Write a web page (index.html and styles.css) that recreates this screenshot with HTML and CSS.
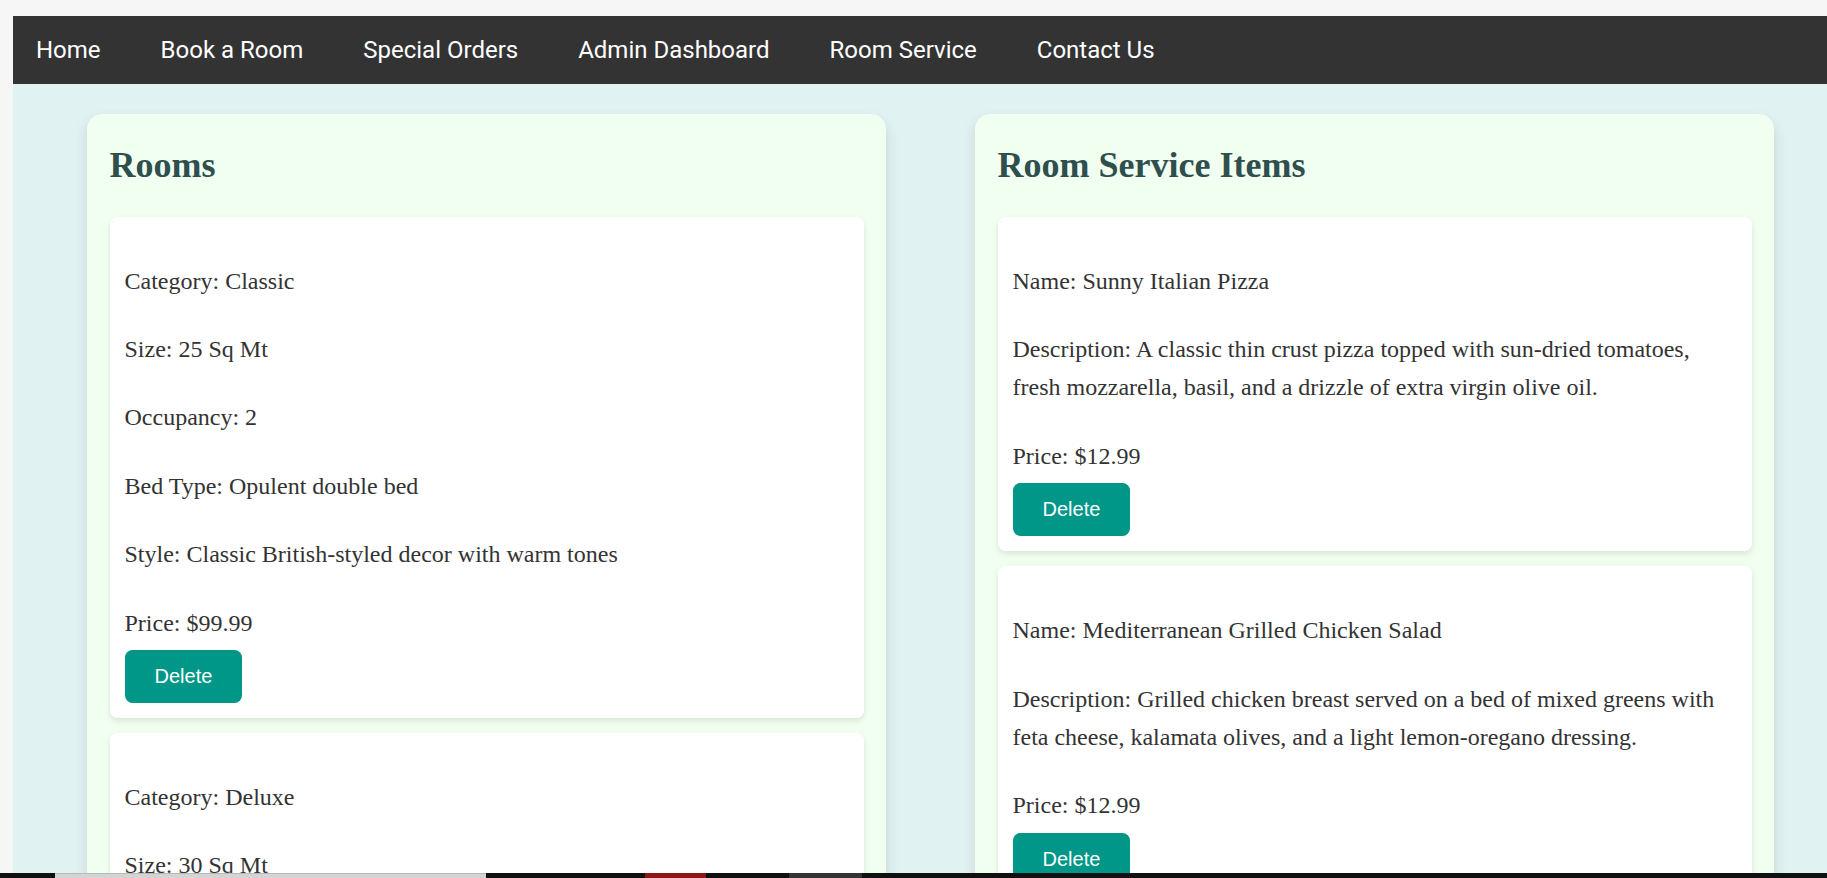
FILE: index.html
```html
<!DOCTYPE html>
<html lang="en">
<head>
<meta charset="utf-8">
<title>Admin Dashboard</title>
<link rel="stylesheet" href="styles.css">
</head>
<body>
<div class="page">
  <nav class="topnav">
    <a href="#">Home</a>
    <a href="#">Book a Room</a>
    <a href="#">Special Orders</a>
    <a href="#">Admin Dashboard</a>
    <a href="#">Room Service</a>
    <a href="#">Contact Us</a>
  </nav>
  <main class="content">
    <section class="panel">
      <h2 class="panel-title">Rooms</h2>
      <div class="card">
        <p>Category: Classic</p>
        <p>Size: 25 Sq Mt</p>
        <p>Occupancy: 2</p>
        <p>Bed Type: Opulent double bed</p>
        <p>Style: Classic British-styled decor with warm tones</p>
        <p class="price">Price: $99.99</p>
        <button class="btn-delete">Delete</button>
      </div>
      <div class="card">
        <p>Category: Deluxe</p>
        <p>Size: 30 Sq Mt</p>
        <p>Occupancy: 2</p>
        <p>Bed Type: King size bed</p>
        <p>Style: Modern decor with elegant finishes</p>
        <p class="price">Price: $149.99</p>
        <button class="btn-delete">Delete</button>
      </div>
    </section>
    <section class="panel">
      <h2 class="panel-title">Room Service Items</h2>
      <div class="card">
        <p>Name: Sunny Italian Pizza</p>
        <p>Description: A classic thin crust pizza topped with sun-dried tomatoes, fresh mozzarella, basil, and a drizzle of extra virgin olive oil.</p>
        <p class="price">Price: $12.99</p>
        <button class="btn-delete">Delete</button>
      </div>
      <div class="card">
        <p>Name: Mediterranean Grilled Chicken Salad</p>
        <p>Description: Grilled chicken breast served on a bed of mixed greens with feta cheese, kalamata olives, and a light lemon-oregano dressing.</p>
        <p class="price">Price: $12.99</p>
        <button class="btn-delete">Delete</button>
      </div>
    </section>
  </main>
</div>
<div class="taskbar">
  <span class="tb-seg tb-dark tb-w55"></span>
  <span class="tb-seg tb-light tb-w431"></span>
  <span class="tb-seg tb-dark tb-w159"></span>
  <span class="tb-seg tb-red tb-w61"></span>
  <span class="tb-seg tb-dark tb-w83"></span>
  <span class="tb-seg tb-grey tb-w73"></span>
  <span class="tb-seg tb-dark tb-fill"></span>
</div>
</body>
</html>
```

FILE: styles.css
```css
html {
  scrollbar-width: none;
}
html::-webkit-scrollbar {
  display: none;
}

body {
  margin: 0;
  padding: 16px 0 0 13px;
  background: #f6f6f6;
  font-family: "Liberation Serif", "Times New Roman", serif;
  font-size: 24px;
  line-height: 1.6;
  color: #333;
  overflow: hidden;
  height: 878px;
  box-sizing: border-box;
}

.page {
  background: #e0f2f1;
  min-height: 862px;
}

.topnav {
  display: flex;
  align-items: center;
  gap: 60px;
  height: 68px;
  padding: 0 0 0 23px;
  background: #333333;
}

.topnav a {
  font-family: Roboto, "Liberation Sans", sans-serif;
  font-size: 24px;
  line-height: 28px;
  color: #ffffff;
  text-decoration: none;
}

.content {
  display: flex;
  align-items: flex-start;
  gap: 89px;
  padding: 30px 0 0 74px;
}

.panel {
  width: 799px;
  flex: none;
  box-sizing: border-box;
  padding: 22.5px;
  background: #f0fff0;
  border-radius: 15px;
  box-shadow: 0 6px 14px rgba(0, 0, 0, 0.12);
}

.panel-title {
  margin: 0 0 22.5px;
  font-size: 36px;
  line-height: 57.6px;
  font-weight: bold;
  color: #2f4f4f;
}

.card {
  background: #ffffff;
  border-radius: 7.5px;
  padding: 15px;
  margin-bottom: 15px;
  box-shadow: 0 3px 6px rgba(0, 0, 0, 0.1);
}

.card p {
  margin: 30px 0;
}

.card p.price {
  margin-bottom: 8px;
}

.btn-delete {
  display: block;
  font-family: "Liberation Sans", Arial, sans-serif;
  font-size: 20px;
  line-height: 23px;
  padding: 15px 30px;
  border: none;
  border-radius: 7.5px;
  background: #009688;
  color: #ffffff;
  cursor: pointer;
}

.taskbar {
  position: fixed;
  left: 0;
  right: 0;
  bottom: 0;
  height: 5px;
  display: flex;
}

.tb-seg {
  display: block;
  height: 100%;
}
.tb-dark { background: #111111; }
.tb-light { background: #d4d4d4; border-top: 1px solid #b8b8b8; box-sizing: border-box; }
.tb-red { background: #8e1616; }
.tb-grey { background: #333333; }
.tb-w55 { width: 55px; }
.tb-w431 { width: 431px; }
.tb-w159 { width: 159px; }
.tb-w61 { width: 61px; }
.tb-w83 { width: 83px; }
.tb-w73 { width: 73px; }
.tb-fill { flex: 1; }
```
